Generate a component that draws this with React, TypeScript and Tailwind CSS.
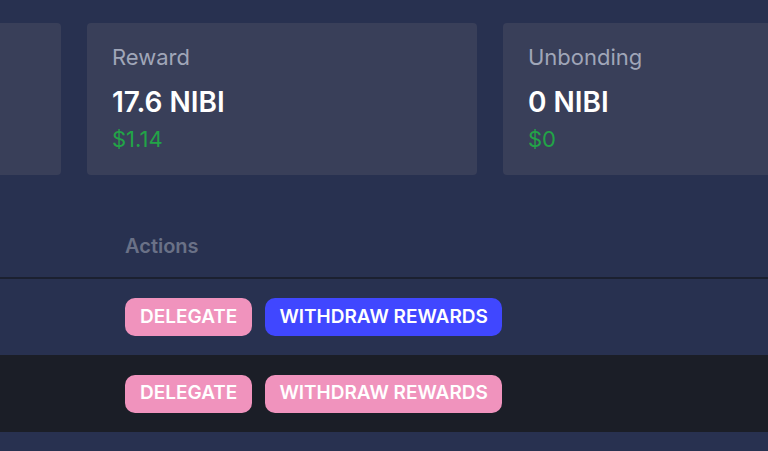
const cards = [
  { title: "Staked", amount: "0 NIBI", usd: "$0" },
  { title: "Reward", amount: "17.6 NIBI", usd: "$1.14" },
  { title: "Unbonding", amount: "0 NIBI", usd: "$0" },
];

const rows = [
  { withdrawActive: true, dark: false },
  { withdrawActive: false, dark: true },
];

export default function App() {
  return (
    <div
      className="w-[768px] h-[451px] overflow-hidden bg-[#283150] text-white"
      style={{ fontFamily: "Inter, 'Noto Sans', sans-serif" }}
    >
      <div className="flex gap-[26px] ml-[-329px] pt-[23px]">
        {cards.map((card) => (
          <div
            key={card.title}
            className="w-[390px] h-[152px] shrink-0 rounded-[4px] bg-[#393f59] pl-[25px] pt-[23px]"
          >
            <div className="text-[22px] leading-[22px] text-[#a0a6b8]">{card.title}</div>
            <div className="mt-[20px] text-[28px] leading-[28px] font-semibold">{card.amount}</div>
            <div className="mt-[12px] text-[22px] leading-[22px] text-[#22a447]">{card.usd}</div>
          </div>
        ))}
      </div>

      <div className="mt-[60px]">
        <div className="h-[44px] border-b-2 border-[#1b2030] pl-[125px]">
          <span className="text-[20px] leading-[20px] font-semibold text-[#6a7187]">Actions</span>
        </div>
        {rows.map((row, index) => (
          <div
            key={index}
            className={`flex items-center gap-[13px] pl-[125px] ${row.dark ? "h-[77px] bg-[#1b1e27]" : "h-[76px]"}`}
          >
            <button className="h-[38px] px-[15px] rounded-[10px] bg-[#f093bd] text-[19px] font-semibold">
              DELEGATE
            </button>
            <button
              className={`h-[38px] px-[14px] rounded-[10px] text-[19px] font-semibold ${row.withdrawActive ? "bg-[#4047ff]" : "bg-[#f093bd]"}`}
            >
              WITHDRAW REWARDS
            </button>
          </div>
        ))}
      </div>
    </div>
  );
}
